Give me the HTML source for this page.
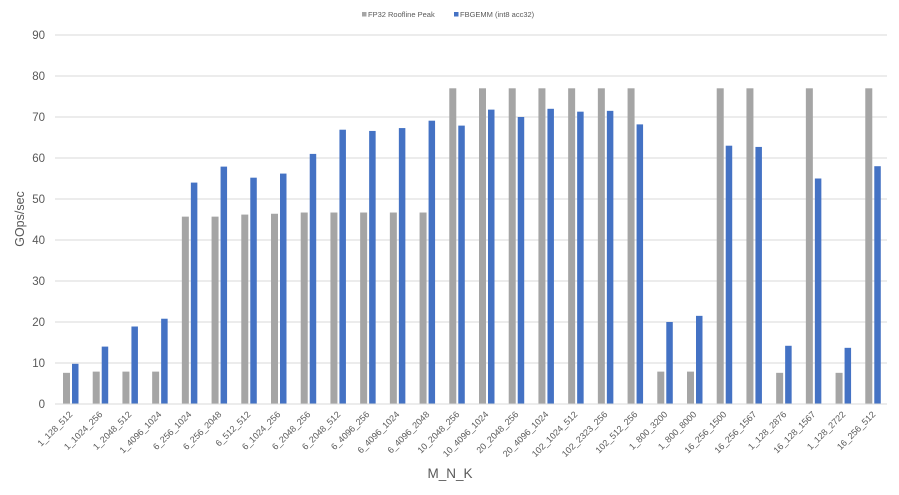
<!DOCTYPE html>
<html><head><meta charset="utf-8"><style>
html,body{margin:0;padding:0;background:#fff;}
svg{display:block;font-family:"Liberation Sans",sans-serif;}
</style></head><body>
<svg id="c" width="899" height="495" viewBox="0 0 899 495" xmlns="http://www.w3.org/2000/svg">
<g id="grid" stroke="#d9d9d9" stroke-width="1"></g>
<g id="bars"></g>
<line x1="55" y1="404" x2="887" y2="404" stroke="#d9d9d9" stroke-width="1"/>
<g font-size="11.5" fill="#595959" text-anchor="end">
<text x="45" y="408">0</text><text x="45" y="367">10</text><text x="45" y="326">20</text><text x="45" y="285">30</text><text x="45" y="244">40</text><text x="45" y="203">50</text><text x="45" y="162">60</text><text x="45" y="121">70</text><text x="45" y="80">80</text><text x="45" y="39">90</text>
</g>
<text transform="translate(24,219) rotate(-90)" font-size="12.5" fill="#595959" text-anchor="middle">GOps/sec</text>
<text x="450" y="478" font-size="13.5" fill="#595959" text-anchor="middle">M_N_K</text>
<rect x="362" y="12" width="4.5" height="4.5" fill="#a5a5a5"/>
<text x="368" y="17" font-size="7.5" fill="#595959">FP32 Roofline Peak</text>
<rect x="454" y="12" width="4.5" height="4.5" fill="#4472c4"/>
<text x="460" y="17" font-size="7.5" fill="#595959">FBGEMM (int8 acc32)</text>
<g id="labels" font-size="9" fill="#595959" text-anchor="end">
<text transform="translate(73,415) rotate(-45)">1_128_512</text>
<text transform="translate(103,415) rotate(-45)">1_1024_256</text>
<text transform="translate(132,415) rotate(-45)">1_2048_512</text>
<text transform="translate(162,415) rotate(-45)">1_4096_1024</text>
<text transform="translate(192,415) rotate(-45)">6_256_1024</text>
<text transform="translate(222,415) rotate(-45)">6_256_2048</text>
<text transform="translate(251,415) rotate(-45)">6_512_512</text>
<text transform="translate(281,415) rotate(-45)">6_1024_256</text>
<text transform="translate(311,415) rotate(-45)">6_2048_256</text>
<text transform="translate(341,415) rotate(-45)">6_2048_512</text>
<text transform="translate(370,415) rotate(-45)">6_4096_256</text>
<text transform="translate(400,415) rotate(-45)">6_4096_1024</text>
<text transform="translate(430,415) rotate(-45)">6_4096_2048</text>
<text transform="translate(460,415) rotate(-45)">10_2048_256</text>
<text transform="translate(489,415) rotate(-45)">10_4096_1024</text>
<text transform="translate(519,415) rotate(-45)">20_2048_256</text>
<text transform="translate(549,415) rotate(-45)">20_4096_1024</text>
<text transform="translate(578,415) rotate(-45)">102_1024_512</text>
<text transform="translate(608,415) rotate(-45)">102_2323_256</text>
<text transform="translate(638,415) rotate(-45)">102_512_256</text>
<text transform="translate(668,415) rotate(-45)">1_800_3200</text>
<text transform="translate(697,415) rotate(-45)">1_800_8000</text>
<text transform="translate(727,415) rotate(-45)">16_256_1500</text>
<text transform="translate(757,415) rotate(-45)">16_256_1567</text>
<text transform="translate(787,415) rotate(-45)">1_128_2876</text>
<text transform="translate(816,415) rotate(-45)">16_128_1567</text>
<text transform="translate(846,415) rotate(-45)">1_128_2722</text>
<text transform="translate(876,415) rotate(-45)">16_256_512</text>
</g>
</svg>
<script>
(function(){
var NS="http://www.w3.org/2000/svg";
var g=document.getElementById('grid');
for(var i=1;i<=9;i++){var y=404-41*i;var l=document.createElementNS(NS,'line');l.setAttribute('x1',55);l.setAttribute('x2',887);l.setAttribute('y1',y);l.setAttribute('y2',y);g.appendChild(l);}
var blue=[9.8,14,18.9,20.8,54,57.9,55.2,56.2,61,66.9,66.6,67.3,69.1,67.9,71.8,70,72,71.3,71.5,68.2,20,21.5,63,62.7,14.2,55,13.7,58];
var gray=[7.6,7.9,7.9,7.9,45.7,45.7,46.2,46.4,46.7,46.7,46.7,46.7,46.7,77,77,77,77,77,77,77,7.9,7.9,77,77,7.6,77,7.6,77];
var b=document.getElementById('bars');var band=832/28;
function r(x,v,w,c){var e=document.createElementNS(NS,'rect');var h=v*4.1;e.setAttribute('x',x);e.setAttribute('y',404-h);e.setAttribute('width',w);e.setAttribute('height',h);e.setAttribute('fill',c);b.appendChild(e);}
for(var i=0;i<28;i++){var x0=55+band*i;r(x0+8,gray[i],7,'#a5a5a5');r(x0+17,blue[i],6.5,'#4472c4');}
})();
</script>
</body></html>
